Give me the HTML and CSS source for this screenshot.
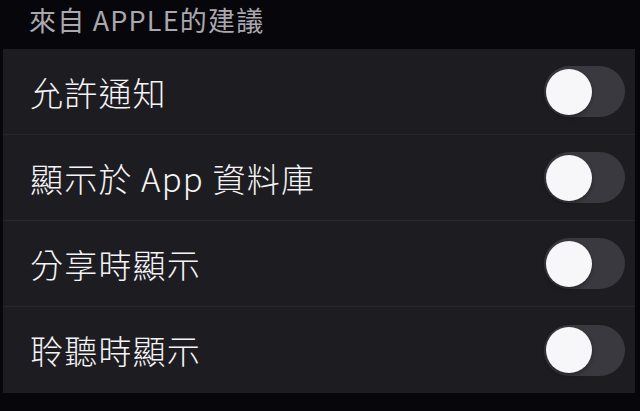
FILE: index.html
```html
<!DOCTYPE html>
<html lang="zh-Hant">
<head>
    <meta charset="UTF-8">
    <meta name="viewport" content="width=device-width, initial-scale=1.0">
    <title>來自 APPLE 的建議</title>
    <link rel="stylesheet" href="styles.css">
</head>
<body>

<div class="section-header">來自 APPLE的建議</div>

<div class="group">
    <div class="row">
        <span class="label">允許通知</span>
        <span class="switch"><span class="knob"></span></span>
    </div>
    <div class="row">
        <span class="label">顯示於 App 資料庫</span>
        <span class="switch"><span class="knob"></span></span>
    </div>
    <div class="row">
        <span class="label">分享時顯示</span>
        <span class="switch"><span class="knob"></span></span>
    </div>
    <div class="row last">
        <span class="label">聆聽時顯示</span>
        <span class="switch"><span class="knob"></span></span>
    </div>
</div>

</body>
</html>
```

FILE: styles.css
```css
body {
    margin: 0;
    padding: 0;
    background: #07060a;
    font-family: "Noto Sans CJK TC", "Noto Sans", sans-serif;
    width: 640px;
    height: 411px;
    overflow: hidden;
}
.section-header {
    height: 49px;
    box-sizing: border-box;
    padding: 0 0 0 29px;
    line-height: 40px;
    font-size: 27px;
    letter-spacing: 1.2px;
    color: #a9a8ae;
}
.group {
    margin-left: 3px;
    width: 632px;
    background: #1d1c21;
}
.row {
    height: 86px;
    box-sizing: border-box;
    display: flex;
    align-items: center;
    justify-content: space-between;
    padding: 0 10px 0 27px;
    border-bottom: 1px solid #27262b;
}
.row.last {
    border-bottom: none;
}
.label {
    font-size: 33px;
    font-weight: 300;
    color: #f4f4f6;
    letter-spacing: 1.2px;
}
.switch {
    width: 81px;
    height: 51px;
    border-radius: 26px;
    background: #3a393f;
    display: flex;
    align-items: center;
    padding-left: 2px;
    box-sizing: border-box;
}
.knob {
    width: 46px;
    height: 46px;
    border-radius: 50%;
    background: #f7f7f9;
    box-shadow: 0 2px 4px rgba(0, 0, 0, 0.35);
}
```
